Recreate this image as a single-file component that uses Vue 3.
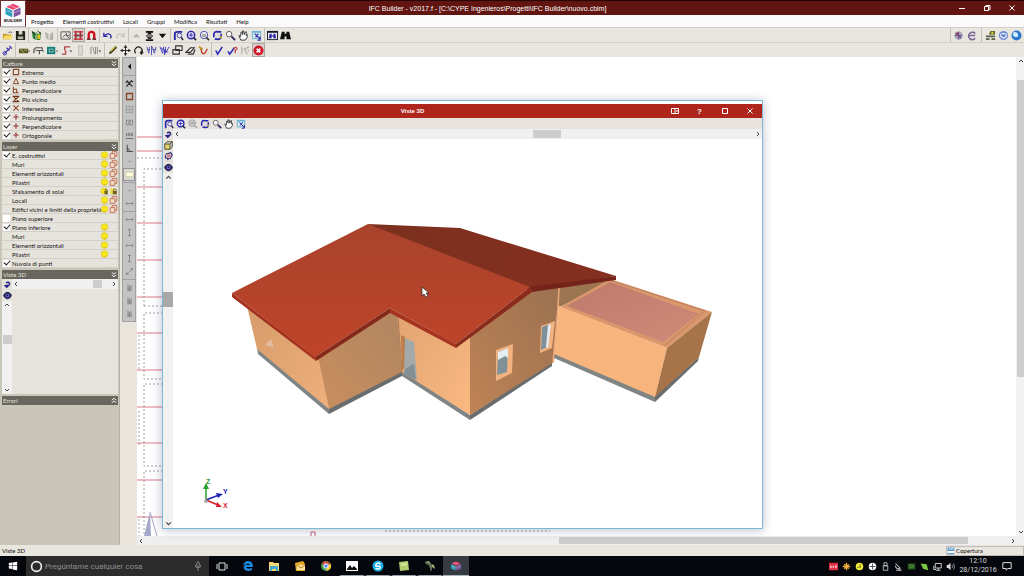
<script setup>
import { ref } from 'vue'

const S = (d, c = '#222', w = 1.3) => `<path d="${d}" fill="none" stroke="${c}" stroke-width="${w}"/>`
const F = (d, c = '#222') => `<path d="${d}" fill="${c}"/>`
const G = '#aaa9a4'
const B = '#2926a8'

const glyphs = {
  open: F('M1 4h4l1 1h4v5H1z', '#c9a227') + F('M3 6h9l-2 4H1z', '#f6dc68') + S('M7 3q2-2 4 0', '#666', 1),
  save: F('M1 1h9l1 1v9H1z', '#22221c') + F('M4 1h4v4H4z', '#d8d8d0') + F('M3 7h6v3H3z', '#b9b9a8'),
  layers: F('M1 1l4 2v8L2 9zM6 2l2 3 3-3-1 9H6z', '#247a2c') + F('M7 5h3v5H7z', '#e0c021') + S('M1 2l4 3M7 1l4 3', '#222', 1),
  layersOff: F('M1 2l4 2v7L2 9zM7 4l3-2v9H6z', '#b5b3ad'),
  template: S('M1 2h10v8H1zM3 8l3-3 4 4M7 3v3h3', '#555', 1),
  dxf: S('M1 2h10M1 6h10M1 10h10M3 1v10M8 1v10', '#c5202d', 1.5) + S('M2 4l8 4M2 8l8-4', '#555', 1),
  magnet: S('M3 11V5q0-3 3-3t3 3v6', '#cf101c', 2.6) + F('M1 9h4v2H1zM7 9h4v2H7z', '#773030'),
  undo: S('M2 3v4h4M2 7q3-4 7-2 2 2 0 4', B),
  redo: S('M10 3v4H6M10 7q-3-4-7-2-2 2 0 4', '#c6c4bf'),
  upOff: F('M2 8l4-4 4 4z', '#b5b3ad'),
  floors: F('M2 1h8v2H2zM2 10h8v2H2zM2 6h8v1H2zM6 2l3 3H3zM6 11l3-3H3z', '#111'),
  down: F('M2 4h8l-4 5z', '#111'),
  zprev: S('M2 11V4q0-2 3-2h5', B, 2) + '<circle cx="7" cy="6" r="2.500" fill="#e8e8fa" stroke="#4a4899"/>' + S('M9 8l2 3', '#26244e', 1.8),
  zall: '<circle cx="5.500" cy="5.500" r="4" fill="#e8e8fa" stroke="#2926a8" stroke-width="1.600"/>' + S('M5.500 3v5M3 5.500h5', B, 1) + S('M8 8l3 3', '#26244e', 1.8),
  zwin: '<circle cx="5.500" cy="5.500" r="4" fill="#f4f4f9" stroke="#4340a5"/>' + S('M4 5h3v2H4z', '#777', 1) + S('M8 8l3 3', '#333', 1.7),
  zgray: '<circle cx="5" cy="5" r="4" fill="#ccc" stroke="#999"/>' + S('M3 5h5M8 8l3 3', '#999', 1.5),
  redraw: F('M4 2h6v7H3z', '#ddd') + S('M2 8V4q1-3 5-2h3M10 4v4q-1 3-5 2H3', B, 1.8) + F('M8 8l3-2-1 4z', '#d5b925'),
  zoom: '<circle cx="4.500" cy="4.500" r="3" fill="#fff" stroke="#555"/>' + S('M7 7l4 4', '#26246e', 2),
  hand: F('M3 11L1 6l2 1V3l1-1 1 3V1h1l1 4 1-3h1v4l1-1v3l-2 3z', '#fff') + S('M3 11L1 6l2 1V3l1-1 1 3V1h1l1 4 1-3h1v4l1-1v3l-2 3z', '#333', 1),
  winfit: F('M1 1h10v9H1z', '#69b4d6') + F('M2 3h8v6H2z', '#d7e8f0') + S('M4 4l6 6M10 7v4H7M8 4L5 8', B, 1.2),
  findwin: F('M0 1h12v10H0z', '#17182c') + F('M1 3h10v7H1z', '#eee') + F('M3 4h2v2h2V4h2l1 5H7V7H5v2H2z', B),
  binoc: F('M2 2h3v2h2V2h3l2 8H7V7H5v3H0z', '#111'),
  addpen: S('M2 10l7-7M8 1l3 3M5 3l3 3', '#403daa', 1.3) + '<circle cx="3" cy="9" r="2" fill="none" stroke="#403daa"/>',
  wall: F('M0 4h10v5H0z', '#55551c') + F('M1 5h3v1H1zM6 5h3v1H6zM3 7h3v1H3z', '#bcb880') + F('M10 6h2l-1 2z', '#444'),
  slab: S('M1 9V5l2-2h7v3H3M7 6v4', '#555', 1.3) + F('M10 6h2l-1 2z', '#444'),
  windowTool: F('M0 2h9v8H0z', '#187c7b') + F('M2 4h5v4H2z', '#86d4c9') + F('M3 5h3v2H3z', '#215959') + F('M10 6h2l-1 2z', '#444'),
  stair: S('M1 10h4V6M4 6V2h6', '#b34545', 1.5) + F('M9 6h3l-1 2z', '#444'),
  column: F('M4 1h4v10H4z', '#dddbd5') + S('M4 1h4v10H4z', '#bbb9b4', 1),
  grid: S('M1 2v8M3 2l2 8M6 2v8M8 2v8', '#888', 1) + F('M9 6h3l-1 2z', '#444'),
  pencil: F('M2 10l1-3 6-6 2 2-6 6z', '#343c19') + S('M4 7l5-5', '#e4c72f', 1.2),
  move: S('M6 1v10M1 6h10', '#222', 1) + F('M6 0l2 3H4zM6 12l2-3H4zM0 6l3-2v4zM12 6L9 4v4z'),
  rotate: S('M3 9a4 4 0 1 1 6 0M9 9V6', '#222', 1.3) + F('M7 8h5l-3 3z'),
  mirror: S('M1 2l2 7 1-7M7 2l2 7 2-7M6 1v10M1 5h3M7 5h4', '#514eb0', 1),
  mirror2: S('M1 2l3 7 1-7M7 2v7l4-7M6 5v6M2 3l8 5', '#3a37bb', 1),
  copy: S('M4 1h7v5H4zM1 5h7v5H1z', '#333', 1.2),
  eraser: S('M1 8l5-5h4l-4 5zM3 10h6l2-5', '#333', 1.3),
  measure: S('M3 3l1 5q2 3 4 0t2-4', '#bd3525', 1.5) + S('M1 2l4 3', '#bb951b', 2),
  check: S('M2 6l2 4 5-8', '#302db7', 1.8),
  checkHelp: S('M1 7l2 3 5-7', '#302db7', 1.8) + S('M7 4q3-3 4 0l-2 2v3', '#bd3030', 1.2),
  cutOff: S('M2 2v8M4 5l6-3M5 5l3 5M9 5v2', G, 1.2),
  stop: '<circle cx="6" cy="6" r="5.500" fill="#cf1625"/>' + S('M4 4l4 4M8 4L4 8', '#fff', 1.7),
  globe: '<circle cx="6" cy="6" r="4.500" fill="#aaa1bc"/>' + S('M2 6h8M6 2v8M3 3l6 6', '#69578b', 1.2) + F('M4 3h2v2H4z', '#b5313a'),
  globe2: S('M10 4a4 4 0 1 0 0 5M3 6h7M8 2l2 2', '#7c6a9b', 1.7),
  books: F('M1 6h10v2H1zM1 9h4v2H1zM7 9h4v2H7z', '#59614a') + F('M6 1h5v4H4z', '#646825') + F('M7 2h2v2H7z', '#e7db48'),
  help: '<circle cx="6" cy="6" r="5" fill="#6d8bd1"/>' + S('M3 4v3l3 2 3-2V4M4 4h4', '#eaf3ff', 1.2),
  web: '<circle cx="6" cy="6" r="5.500" fill="#2d77cc"/>' + F('M3 2l4 1 1 4-3 1-3-2z', '#d4f2ff'),
  square: S('M2 2h8v8H2z', '#8a4726', 1.7),
  triangle: S('M6 2l4 8H2z', '#8a4726', 1.5),
  perp: S('M2 1v9h8M2 5h5v5', '#8a4726', 1.6),
  nearest: S('M1 2h10M1 10h10M2 2l8 8M10 2L2 10', '#713817', 1.8),
  cross: S('M2 2l8 8M10 2L2 10', '#8a4726', 1.7),
  plus: S('M6 2v8M2 6h8', '#963333', 1.6),
  bulb: '<circle cx="6" cy="6" r="5" fill="#f7e71c" stroke="#dbc622"/>' + F('M4 9h4v2H4z', '#e7c61c'),
  cube: F('M1 4h7v7H1z', '#f3dfcf') + S('M1 4h7v7H1zM4 4V1h7v7H8', '#c26a4c', 1.4),
  lock: F('M1 2h6v9H1z', '#eadb4a') + F('M5 6h6v5H5z', '#716019') + S('M6 6V4q2-2 4 0v2', '#716019', 1.3),
  bulbLock: '<circle cx="5" cy="6" r="4.500" fill="#f7e71c" stroke="#dbc622"/>' + F('M6 6h5v5H6z', '#716019') + S('M7 6V4q2-2 3 0v2', '#716019', 1.3),
  rot: F('M1 7l4 4 5-5H7z', '#202088') + S('M4 4q4-3 5 2', '#202088', 2),
  eye: F('M0 6q6-10 12 0-6 10-12 0', '#292763') + '<circle cx="6" cy="6" r="2.500" fill="#6e68c4"/>' + F('M5 5h2v2H5z', '#111133'),
  view3d: F('M1 4h7v7H1z', '#e5d66e') + S('M1 4h7v7H1zM1 4l3-3h7v7l-3 3M8 4l3-3', '#403e2a', 1.2),
  palette: S('M2 3l7-2 2 3-3 5H5M2 4v4h3v3', '#312b71', 1.5) + F('M4 3h5v4H4z', '#d18891'),
  arrowLeft: F('M8 2v8L4 6z', '#111'),
  hammer: S('M2 10l7-8M3 3l7 7M1 5l3-3M8 2l3 2', '#333', 1.6),
  dots: S('M1 2h10M1 6h10M1 10h10M2 1v10M6 1v10M10 1v10', '#8d9094', .8),
  smallsq: S('M2 3h8v6H2z', '#777', 1) + S('M5 5h2v2H5z', '#777', 1),
  ruler: S('M1 10h10', '#666', 1.2) + S('M2 3v4M4 3h2v3H4zM8 3h2v3H8z', '#777', 1.2),
  angle: S('M3 1v9h8M3 5l4 5', '#555', 1.5),
  yellow: F('M1 3h10v6H1z', '#fffddd') + S('M1 3h10v6H1z', '#c6c69b', 1),
  dimH: S('M1 6h10M2 4v4M10 4v4', '#8b8b8b', 1.3),
  dimV: S('M6 1v10M4 2h4M4 10h4', '#8b8b8b', 1.3),
  diag: S('M2 10l8-8M2 7v3h3M7 2h3v3', '#8b8b8b', 1.2),
  faint: S('M3 6h6M6 4v4', '#a4a4a4', 1),
  person: S('M4 2v9M6 4v7M8 3v8M3 8h6', '#898989', 1.5),
  logo: F('M12 1l9 4-9 4-9-4z', '#ed416c') + F('M2 6l9 4v9l-9-4z', '#25a2bc') + F('M22 6l-9 4v9l9-4z', '#7c55a3') + S('M12 9v9M4 10l7 3M13 13l8-3M7 3l10 4', '#f2c7d8', .8),
  start: F('M1 2.500l4-.6V5.500H1zM5.500 1.800l5.500-.8v4.500H5.500zM1 6h4v3.700l-4-.6zM5.500 6H11v5l-5.500-.8z', '#fff'),
  ring: '<circle cx="6" cy="6" r="4.500" fill="none" stroke="#eee" stroke-width="1.500"/>',
  mic: '<rect x="4.500" y="1" width="3" height="6" rx="1.500" fill="none" stroke="#999"/>' + S('M3 5v2q3 3 6 0V5M6 9v3', '#999', 1),
  tasks: S('M3 3h6v7H3zM1 4v5M11 4v5', '#ddd', 1),
  edge: F('M1 6q1-5 5-5 5 0 5 6H4q1 3 6 1v2q-4 2-7 0-3-3 1-6-2 0-3 2m3-1h4q-2-3-4 0', '#168be0'),
  explorer: F('M1 2h4l1 1h5v8H1z', '#f7d873') + F('M2 6h8v5H8V9H4v2H2z', '#40a9d2'),
  outlook: F('M1 3l8-2 2 3v7H2z', '#e6ac2c') + F('M3 5h8v5H3z', '#fae69b') + S('M3 5l4 3 4-3', '#b77b16', 1),
  chrome: '<circle cx="6" cy="6" r="5" fill="#48a350"/>' + F('M2 3q4-4 9 1L6 5 4 7z', '#db4437') + F('M11 4q1 6-5 7l2-6z', '#f6c638') + '<circle cx="6" cy="6" r="2.200" fill="#4c8bf5" stroke="#fff"/>',
  photos: F('M0 1h12v10H0z', '#fff') + F('M1 10V9l3-4 2 3 2-2 3 3v1z', '#111'),
  skype: '<circle cx="6" cy="6" r="5.500" fill="#18aee6"/>' + S('M8.500 4Q5 2 4 4.500T6 6q3 0 2 2-2 2-4.500 0', '#fff', 1.500),
  note: F('M1 2l9-1 1 9-9 1z', '#b5ce6d') + F('M3 4l6-1v2L3 6z', '#d7e9a1'),
  cad: F('M1 2l4-1 2 3 3 1 1 4-3-2-1 4-2-6-3-1z', '#9ab37a') + S('M2 3l5 2v6', '#515b50', 1.500),
  trayRed: F('M0 1h12v10H0z', '#db2f43') + S('M2 5v2h2V5M6 5v3M8 5h2v2H8', '#fff', 1),
  flower: S('M6 1v10M1 6h10M3 3l6 6M9 3L3 9', '#ebaa39', 1.700),
  ycircle: '<circle cx="6" cy="6" r="5" fill="#ece93e"/>' + S('M7 3v4H3', '#777716', 1.400),
  shield: '<circle cx="6" cy="6" r="5" fill="#fff"/>' + S('M6 2v8M2 6h8', '#555', 1.300),
  usb: S('M4 1h4v4H4zM3 5h6v6H3z', '#ddd', 1),
  sat: S('M2 2l6 6M2 5q0 5 7 4M3 11h7', '#ccc', 1.400),
  nvidia: F('M1 2h10v8H1z', '#28581f') + S('M3 5q3-3 6 1-3 3-6 0', '#71b44f', 1),
  leaf: F('M1 2l8 1 2 8-7-2z', '#7bc743'),
  net: S('M3 2h8v6H3zM7 8v3M4 11h6M1 5v5h3', '#ddd', 1.200),
  sound: F('M1 4h2l3-3v10L3 8H1z', '#ddd') + S('M8 4q2 2 0 4M10 2q3 4 0 8', '#bbb', 1),
  message: S('M1 2h10v7H7l-2 2V9H1z', '#ddd', 1.200),
  disk: F('M1 1h10v10H1z', '#4e94c4') + F('M1 6h10v3H1z', '#fff') + F('M3 2h7v2H3z', '#bfe3f5')
}

const menus = ['Progetto', 'Elementi costruttivi', 'Locali', 'Gruppi', 'Modifica', 'Risultati', 'Help']
const bar1 = [['open', 'save'], ['layers', 'layersOff'], ['template', 'dxf', 'magnet'], ['undo', 'redo'], ['upOff', 'floors', 'down'], ['zprev', 'zall', 'zwin', 'redraw', 'zoom', 'hand', 'winfit'], ['findwin', 'binoc']]
const bar1End = [['globe', 'globe2'], ['books', 'help', 'web']]
const bar2 = [['addpen'], ['wall', 'slab', 'windowTool', 'stair', 'column', 'grid'], ['pencil', 'move', 'rotate', 'mirror', 'mirror2', 'copy', 'eraser', 'measure'], ['check', 'checkHelp', 'cutOff', 'stop']]
const sideTools = [['arrowLeft'], ['hammer', 'square', 'dots', 'smallsq', 'ruler', 'angle', 'faint', 'yellow'], ['faint', 'dimH'], ['dimH', 'dimV', 'dimH', 'dimV', 'diag'], ['person', 'person', 'person']]
const snaps = ref([
  ['square', 'Estremo'], ['triangle', 'Punto medio'], ['perp', 'Perpendicolare'], ['nearest', 'Più vicino'],
  ['cross', 'Intersezione'], ['plus', 'Prolungamento'], ['plus', 'Perpendicolare'], ['plus', 'Ortogonale']
].map(([icon, label]) => ({ icon, label, on: true })))
const layers = ref([
  { label: 'E. costruttivi', on: true, icons: ['bulb', 'cube'] },
  { label: 'Muri', icons: ['bulb', 'cube'] },
  { label: 'Elementi orizzontali', icons: ['bulb', 'cube'] },
  { label: 'Pilastri', icons: ['bulb', 'cube'] },
  { label: 'Sfalsamento di solai', icons: ['bulbLock', 'lock'] },
  { label: 'Locali', icons: ['bulb', 'cube'] },
  { label: 'Edifici vicini e limiti della proprietà', icons: ['bulb', 'cube'] },
  { label: 'Piano superiore', on: false, icons: [] },
  { label: 'Piano inferiore', on: true, icons: ['bulb', ''] },
  { label: 'Muri', icons: ['bulb', ''] },
  { label: 'Elementi orizzontali', icons: ['bulb', ''] },
  { label: 'Pilastri', icons: ['bulb', ''] },
  { label: 'Nuvola di punti', on: true, icons: [] }
])
const viewTools = ['zprev', 'zall', 'zgray', 'redraw', 'zoom', 'hand', 'winfit']
const viewSide = ['rot', 'view3d', 'palette', 'eye']
const apps = ['tasks', 'edge', 'explorer', 'outlook', 'chrome', 'photos', 'skype', 'note', 'cad', 'logo']
const running = ['photos', 'skype', 'note', 'cad']
const tray = ['trayRed', 'flower', 'ycircle', 'shield', 'usb', 'sat', 'nvidia', 'leaf', 'net', 'sound']
const planLines = [137, 151, 187, 223, 260, 297, 333, 370, 407, 443, 480, 517]
const box = (n) => (n === 'logo' ? '0 0 24 20' : '0 0 12 12')
</script>

<template>
  <div class="app">
    <header class="top">
      <div class="brand">
        <svg viewBox="0 0 24 20" v-html="glyphs.logo" />
        <b>BUILDER</b>
      </div>
      <div class="titlebar">
        <h1>IFC Builder - v2017.f - [C:\CYPE Ingenieros\Progetti\IFC Builder\nuovo.cbim]</h1>
        <div class="controls">
          <button aria-label="Minimize"><svg viewBox="0 0 8 8"><path d="M1 4.500h6" /></svg></button>
          <button aria-label="Restore"><svg viewBox="0 0 8 8"><path d="M1.500 2.500h4v4h-4zM3 2.500v-1h4v4H5.500" /></svg></button>
          <button aria-label="Close"><svg viewBox="0 0 8 8"><path d="M1.500 1.500l5 5M6.500 1.500l-5 5" /></svg></button>
        </div>
      </div>
      <nav class="menu"><button v-for="m in menus" :key="m">{{ m }}</button></nav>
    </header>

    <div class="toolbar">
      <div v-for="(g, i) in bar1" :key="i" class="group">
        <button v-for="n in g" :key="n" :aria-label="n" :class="{ pressed: n === 'dxf' }"><svg :viewBox="box(n)" v-html="glyphs[n]" /></button>
      </div>
      <span class="spacer" />
      <div v-for="(g, i) in bar1End" :key="'e' + i" class="group end">
        <button v-for="n in g" :key="n" :aria-label="n"><svg :viewBox="box(n)" v-html="glyphs[n]" /></button>
      </div>
    </div>
    <div class="toolbar">
      <div v-for="(g, i) in bar2" :key="i" class="group" :class="{ drops: i === 1 }">
        <button v-for="n in g" :key="n" :aria-label="n" :class="{ pressed: n === 'stop' }"><svg :viewBox="box(n)" v-html="glyphs[n]" /></button>
      </div>
    </div>

    <main class="work">
      <aside class="dock">
        <section>
          <h2>Catture<svg viewBox="0 0 8 8"><path d="M1 1l3 2.500L7 1M1 4.500L4 7l3-2.500" /></svg></h2>
          <label v-for="(s, i) in snaps" :key="i" class="row">
            <input v-model="s.on" type="checkbox" />
            <svg class="snap" viewBox="0 0 12 12" v-html="glyphs[s.icon]" />
            <span class="name">{{ s.label }}</span>
          </label>
        </section>
        <section>
          <h2>Layer<svg viewBox="0 0 8 8"><path d="M1 1l3 2.500L7 1M1 4.500L4 7l3-2.500" /></svg></h2>
          <component :is="l.on === undefined ? 'div' : 'label'" v-for="(l, i) in layers" :key="i" class="row">
            <input v-if="l.on !== undefined" v-model="l.on" type="checkbox" />
            <span v-else class="indent" />
            <span class="name">{{ l.label }}</span>
            <svg v-for="(n, k) in l.icons" :key="k" class="mark" viewBox="0 0 12 12" v-html="glyphs[n] || ''" />
          </component>
        </section>
        <section>
          <h2>Viste 3D<svg viewBox="0 0 8 8"><path d="M1 1l3 2.500L7 1M1 4.500L4 7l3-2.500" /></svg></h2>
          <div class="mini">
            <div class="mini-side">
              <button aria-label="Rotate"><svg viewBox="0 0 12 12" v-html="glyphs.rot" /></button>
              <button aria-label="View"><svg viewBox="0 0 12 12" v-html="glyphs.eye" /></button>
              <div class="vscroll">
                <svg class="arr" viewBox="0 0 8 8"><path d="M2 5l2-2 2 2" /></svg>
                <i class="thumb" />
                <svg class="arr" viewBox="0 0 8 8"><path d="M2 3l2 2 2-2" /></svg>
              </div>
            </div>
            <div class="hscroll">
              <svg class="arr" viewBox="0 0 8 8"><path d="M5 2L3 4l2 2" /></svg>
              <i class="thumb" />
              <svg class="arr" viewBox="0 0 8 8"><path d="M3 2l2 2-2 2" /></svg>
            </div>
          </div>
        </section>
        <section>
          <h2>Errori<svg viewBox="0 0 8 8"><path d="M1 3.500L4 1l3 2.500M1 7l3-2.500L7 7" /></svg></h2>
        </section>
      </aside>

      <div class="strip">
        <div class="tools">
          <div v-for="(g, i) in sideTools" :key="i" class="tgroup">
            <button v-for="(n, k) in g" :key="k" :aria-label="n" :class="{ lit: n === 'yellow' }"><svg viewBox="0 0 12 12" v-html="glyphs[n]" /></button>
          </div>
        </div>
      </div>

      <div class="canvas">
        <svg class="plan" width="879" height="479" viewBox="137 57 879 479">
          <g stroke="#d9788a" stroke-width="1.200">
            <path v-for="y in planLines" :key="y" :d="`M137 ${y}h480`" />
          </g>
          <g fill="none" stroke="#888" stroke-dasharray="2 2" stroke-width=".8">
            <path d="M137 158h30M144 306V169h30M144 306h30M167 313h-23v66h23M167 384h-23v82h23M167 471h-23v65M139 335v35M139 411v36M139 519v17M385 531h165" />
          </g>
          <path d="M150 512l-6 24h7z" fill="#a4a7c7" /><path d="M150 512l7 24" stroke="#a4a7c7" />
          <path d="M311 536v-4h4v4" fill="none" stroke="#d06476" />
        </svg>
        <div class="cv">
          <svg class="arr" viewBox="0 0 8 8"><path d="M2 5l2-2 2 2" /></svg>
          <i class="thumb" />
          <svg class="arr" viewBox="0 0 8 8"><path d="M2 3l2 2 2-2" /></svg>
        </div>
        <div class="ch">
          <svg class="arr" viewBox="0 0 8 8"><path d="M5 2L3 4l2 2" /></svg>
          <i class="thumb" />
          <svg class="arr" viewBox="0 0 8 8"><path d="M3 2l2 2-2 2" /></svg>
        </div>

        <section class="window">
          <div class="wtitle">
            <h2>Viste 3D</h2>
            <div class="controls">
              <button aria-label="Layout"><svg viewBox="0 0 8 8"><path d="M.5 1.500h7v5h-7zM4 2v5M6 3v2" /></svg></button>
              <button aria-label="Help">?</button>
              <button aria-label="Maximize"><svg viewBox="0 0 8 8"><path d="M1.500 1.500h5v5h-5z" /></svg></button>
              <button aria-label="Close window"><svg viewBox="0 0 8 8"><path d="M1.500 1.500l5 5M6.500 1.500l-5 5" /></svg></button>
            </div>
          </div>
          <div class="wtools">
            <button v-for="n in viewTools" :key="n" :aria-label="n"><svg viewBox="0 0 12 12" v-html="glyphs[n]" /></button>
          </div>
          <div class="wbody">
            <div class="wside">
              <button v-for="n in viewSide" :key="n" :aria-label="n"><svg viewBox="0 0 12 12" v-html="glyphs[n]" /></button>
              <div class="vscroll">
                <svg class="arr" viewBox="0 0 8 8"><path d="M2 5l2-2 2 2" /></svg>
                <i class="thumb" />
                <svg class="arr" viewBox="0 0 8 8"><path d="M2 3l2 2 2-2" /></svg>
              </div>
            </div>
            <div class="wview">
              <div class="hscroll">
                <svg class="arr" viewBox="0 0 8 8"><path d="M5 2L3 4l2 2" /></svg>
                <i class="thumb" />
                <svg class="arr" viewBox="0 0 8 8"><path d="M3 2l2 2-2 2" /></svg>
              </div>
              <svg class="model" viewBox="173 139 589 389">
                <defs>
                  <linearGradient id="roof" x1="0" y1="0" x2="0" y2="1"><stop offset="0" stop-color="#a9432c" /><stop offset="1" stop-color="#bf4429" /></linearGradient>
                  <linearGradient id="dark" x1="0" y1="0" x2="1" y2="0"><stop offset="0" stop-color="#7c301e" /><stop offset="1" stop-color="#862f21" /></linearGradient>
                  <linearGradient id="wallA" x1="0" y1="0" x2="1" y2="1"><stop offset="0" stop-color="#d69b6b" /><stop offset="1" stop-color="#eeb07c" /></linearGradient>
                  <linearGradient id="wallB" x1="0" y1="1" x2="1" y2="0"><stop offset="0" stop-color="#c98e5f" /><stop offset="1" stop-color="#b08560" /></linearGradient>
                  <linearGradient id="wallC" x1="0" y1="0" x2="1" y2="1"><stop offset="0" stop-color="#e1a472" /><stop offset="1" stop-color="#fbb981" /></linearGradient>
                  <linearGradient id="gable" x1="0" y1="1" x2="1" y2="0"><stop offset="0" stop-color="#bf8355" /><stop offset="1" stop-color="#9b7150" /></linearGradient>
                  <linearGradient id="flat" x1="0" y1="0" x2="1" y2="1"><stop offset="0" stop-color="#bd7b6d" /><stop offset="1" stop-color="#cf8a78" /></linearGradient>
                </defs>
                <g fill="#7f8484">
                  <path d="M257 348l72 60v6l-71-60z" /><path d="M402 371l68 44v5l-68-44z" /><path d="M554 353l101 43v6l-101-44z" />
                </g>
                <g fill="#696d6e">
                  <path d="M329 408l73-37v5l-73 38z" /><path d="M470 415l82-54v5l-82 54z" /><path d="M655 396l44-39-1 4-43 41z" />
                </g>
                <path d="M247 306l73 51 9 52-72-60z" fill="url(#wallA)" />
                <path d="M265 345l6-6 3 9z" fill="#e3bb9b" />
                <path d="M318 356l75-46 5 6 4 56-73 37z" fill="url(#wallB)" />
                <path d="M470 336l60-47 30-2-6 75-84 53z" fill="url(#gable)" />
                <path d="M397 314l61 30 12-8v79l-68-43z" fill="url(#wallC)" />
                <path d="M398 317l4 55" stroke="#9e714f" stroke-width=".8" />
                <path d="M401 335l4 2v31l-3 2z" fill="#ba7d4b" />
                <path d="M405 338l9 4 3 38-13-6z" fill="#a4a9aa" /><path d="M405 369l9-5 2 16-12-6z" fill="#858f96" />
                <path d="M559 287l55-9-32 19-23 10z" fill="#9b7450" />
                <path d="M559 288l-1 19-5 55" fill="none" stroke="#eda87a" stroke-width="1.500" />
                <path d="M496 350l17-6-1 29-16 8z" fill="#f3b381" />
                <path d="M498 352l10-4-1 24-10 3z" fill="#809297" /><path d="M498 352l10-4v10l-3-2-7 4z" fill="#e4eef3" />
                <path d="M541 326l14-5-3 27-12 5z" fill="#f3b381" />
                <path d="M542 327l8-3-3 23-6 3z" fill="#7e9099" /><path d="M548 325l3-1-3 24-2-1z" fill="#e8edf5" />
                <path d="M560 307l50-28 102 33-45 36z" fill="#d9976b" />
                <path d="M567 306l43-24 89 32-36 28z" fill="url(#flat)" />
                <path d="M610 280l95 31-40 34" fill="none" stroke="#bd8060" />
                <path d="M559 306l108 42-12 49-101-43z" fill="#f7b47d" />
                <path d="M667 348l45-36-13 45-44 40z" fill="#a77349" />
                <path d="M368 224l92 4 156 48-86 14-150-55z" fill="url(#dark)" />
                <path d="M530 287l86-11v4l-84 12z" fill="#74241b" />
                <path d="M368 224l162 63-74 57-66-36-75 49-83-64z" fill="url(#roof)" />
                <path d="M232 293l83 64 1 4-84-64z" fill="#a43120" />
                <path d="M315 357l75-49v5l-74 48z" fill="#852a1b" />
                <path d="M390 308l66 36v4l-66-35z" fill="#a63420" />
                <path d="M456 344l74-57 2 5-76 56z" fill="#8b2b1b" />
                <path d="M422 287v9l2-2 2 3 2-1-2-3h3z" fill="#fff" stroke="#222" stroke-width=".7" />
                <g stroke-width="1.500" fill="none">
                  <path d="M206 500v-12" stroke="#24a12c" /><path d="M206 500l13-5" stroke="#2222b5" /><path d="M206 500l12 5" stroke="#d71f2d" />
                </g>
                <path d="M206 483l-3 6h6z" fill="#24a12c" /><path d="M223 494l-7-1 2 5z" fill="#2222b5" /><path d="M222 507l-5-5-1 5z" fill="#d71f2d" />
                <circle cx="206" cy="501" r="1.500" fill="#bbb" stroke="#777" stroke-width=".6" />
                <g class="axis"><text x="206" y="484" fill="#24a12c">Z</text><text x="223" y="494" fill="#2222b5">Y</text><text x="223" y="508" fill="#d71f2d">X</text></g>
              </svg>
            </div>
          </div>
        </section>
      </div>
    </main>

    <footer class="status">
      <span>Viste 3D</span>
      <span class="plane"><svg viewBox="0 0 12 12" v-html="glyphs.disk" />Copertura</span>
    </footer>

    <div class="taskbar">
      <button class="start" aria-label="Start"><svg viewBox="0 0 12 12" v-html="glyphs.start" /></button>
      <label class="search">
        <svg viewBox="0 0 12 12" v-html="glyphs.ring" />
        <input type="text" placeholder="Pregúntame cualquier cosa" aria-label="Pregúntame cualquier cosa" />
        <svg class="mic" viewBox="0 0 12 12" v-html="glyphs.mic" />
      </label>
      <button v-for="n in apps" :key="n" class="task" :aria-label="n" :class="{ running: running.includes(n), active: n === 'logo' }"><svg :viewBox="box(n)" v-html="glyphs[n]" /></button>
      <div class="tray">
        <svg v-for="n in tray" :key="n" viewBox="0 0 12 12" v-html="glyphs[n]" />
        <time><span>12:10</span><span>28/12/2016</span></time>
        <svg class="msg" viewBox="0 0 12 12" v-html="glyphs.message" />
      </div>
    </div>
  </div>
</template>

<style>
body { margin: 0; overflow: hidden; }
</style>

<style scoped>
* { box-sizing: border-box; }
.app { height: 100vh; display: flex; flex-direction: column; background: #e8e4dd; font: 6px/9px Lato, "Liberation Sans", Arial, sans-serif; color: #111; }
svg { display: block; flex: none; }
button { font: inherit; color: inherit; background: none; border: 0; padding: 0; margin: 0; display: flex; align-items: center; justify-content: center; }
h1, h2 { margin: 0; font-size: 6px; line-height: 9px; }

.top { display: grid; grid-template: 15px 12px / 26px 1fr; }
.brand { grid-row: 1 / 3; background: #faf8f8; border: 1px solid #6b3030; border-bottom-color: #bbb; display: flex; flex-direction: column; align-items: center; padding-top: 2px; }
.brand svg { width: 18px; height: 15px; }
.brand b { font: bold 4px/5px "Liberation Sans", sans-serif; }
.titlebar { background: #611410; border-top: 1px solid #250505; color: #fff; display: flex; align-items: center; }
.titlebar h1 { flex: 1; text-align: center; font: 7px/9px "Liberation Sans", sans-serif; }
.controls { display: flex; }
.controls button { width: 25px; height: 13px; color: #fff; }
.controls svg { width: 8px; height: 8px; fill: none; stroke: #fff; stroke-width: 1; }
.menu { background: #fbfafa; display: flex; align-items: center; padding-left: 5px; gap: 9px; }

.toolbar { height: 15px; flex: none; display: flex; align-items: center; padding-left: 1px; background: #e9e6df; border-top: 1px solid #d2cfc9; }
.toolbar svg { width: 11px; height: 11px; }
.group { display: flex; }
.group + .group { margin-left: 1px; padding-left: 1px; border-left: 1px solid #c3c0b8; }
.group button { width: 13px; height: 14px; }
.group.drops button { width: 14px; }
.group.drops button:last-child { width: 16px; }
.group .pressed { background: #d9d2cf; border: 1px solid #a9a5a0; }
.spacer { flex: 1; }
.end { padding-left: 1px; border-left: 1px solid #c3c0b8; }
.group.end + .group.end { margin-left: 3px; padding-left: 2px; }
.group.end:last-child { padding-right: 1px; }

.work { flex: 1; min-height: 0; display: flex; }
.dock { width: 120px; flex: none; background: #c9c6b9; padding: 2px 1px 0 2px; display: flex; flex-direction: column; gap: 2px; border-right: 1px solid #b5b2aa; }
.dock section { background: #e6e3dd; }
.dock h2 { height: 9px; background: #69665f; color: #e5e2d8; font-weight: normal; display: flex; justify-content: space-between; padding: 0 1px; align-items: center; }
.dock h2 svg { width: 6px; height: 7px; fill: none; stroke: #fff; stroke-width: 1.2; }
.row { height: 9px; display: flex; align-items: center; border-bottom: 1px solid #d3d0c9; }
.row input { appearance: none; width: 7px; height: 7px; margin: 0 2px 0 1px; flex: none; background: #fff; display: grid; place-items: center; }
.row input:checked::after { content: ""; width: 5px; height: 3px; border: solid #111; border-width: 0 0 1px 1px; transform: translateY(-1px) rotate(-48deg); }
.snap { width: 8px; height: 8px; margin-right: 2px; }
.indent { width: 10px; flex: none; }
.name { flex: 1; min-width: 0; white-space: nowrap; }
.mark { width: 9px; height: 8px; }
.mini { display: flex; height: 115px; }
.mini-side, .wside { width: 10px; display: flex; flex-direction: column; background: #f3f3f3; }
.mini-side button, .wside button { height: 11px; background: #e6e3dd; }
.mini-side svg { width: 9px; height: 9px; }
.vscroll { flex: 1; display: flex; flex-direction: column; align-items: center; background: #f1f1f1; }
.hscroll { flex: 1; height: 10px; display: flex; align-items: center; background: #f0f0f0; }
svg.arr { width: 8px; height: 8px; fill: none; stroke: #444; stroke-width: 1; }
.thumb { background: #cdcdcd; display: block; }
.mini .vscroll .thumb { width: 9px; height: 9px; margin: 26px 0 auto; }
.mini .hscroll .thumb { width: 9px; height: 8px; margin: 0 8px 0 auto; }

.strip { width: 17px; flex: none; padding: 0 1px 0 2px; background: #e9e4dc; }
.tools { background: #c4c3c3; border: 1px solid #a2a1a1; }
.tgroup { padding: 1px 0; }
.tgroup + .tgroup { border-top: 1px solid #a2a1a1; }
.tgroup button { width: 100%; height: 13px; }
.tgroup:first-child button { height: 15px; }
.tgroup svg { width: 9px; height: 9px; }
.tgroup .lit { background: #d9d8d4; border: 1px solid #949494; }

.canvas { flex: 1; min-width: 0; position: relative; background: #fff; display: grid; grid-template: 1fr 9px / 1fr 9px; overflow: hidden; }
.plan { grid-area: 1 / 1; }
.cv { grid-area: 1 / 2; background: #f2f2f2; display: flex; flex-direction: column; align-items: center; }
.ch { grid-area: 2 / 1 / 3 / 3; background: #efefef; display: flex; align-items: center; position: relative; padding-right: 8px; }
.cv .thumb { width: 7px; height: 297px; margin: 15px 0 auto; }
.ch .thumb { height: 7px; width: 409px; margin: 0 41px 0 auto; }

.window { position: absolute; left: 25px; top: 43px; width: 601px; height: 429px; display: flex; flex-direction: column; background: #fff; border: 1px solid #7cb7d3; padding-top: 3px; box-shadow: 0 1px 10px rgba(30, 40, 90, .3); }
.wtitle { height: 14px; flex: none; display: flex; align-items: center; background: #b0251b; color: #fff; }
.wtitle h2 { flex: 1; text-align: center; font: bold 6px/9px "Liberation Sans", sans-serif; }
.wtitle .controls button { width: 25px; font: bold 8px/9px "Liberation Sans", sans-serif; }
.wtools { height: 11px; flex: none; display: flex; background: #e8e2df; }
.wtools button { width: 12px; }
.wtools svg { width: 10px; height: 10px; }
.wbody { flex: 1; min-height: 0; display: flex; }
.wside svg { width: 9px; height: 9px; }
.wside .vscroll .thumb { width: 10px; height: 15px; background: #a8a8a8; margin: 110px 0 auto; }
.wview { flex: 1; min-width: 0; display: flex; flex-direction: column; }
.wview .hscroll { flex: none; }
.wview .thumb { width: 28px; height: 8px; margin: 0 193px 0 auto; }
.model { flex: 1; min-height: 0; width: 100%; }
.axis { font: bold 7px "Liberation Sans", sans-serif; }

.status { height: 11px; flex: none; display: flex; align-items: center; justify-content: space-between; padding-left: 2px; background: #e9e5df; }
.plane { width: 78px; height: 10px; display: flex; align-items: center; gap: 1px; border: 1px solid #c0bdb8; }
.plane svg { width: 8px; height: 8px; }

.taskbar { height: 20px; flex: none; display: flex; background: #05070c; color: #ddd; }
.start { width: 26px; }
.start svg { width: 10px; height: 10px; }
.search { width: 183px; display: flex; align-items: center; background: #2c2c2d; padding: 0 6px 0 4px; }
.search svg { width: 13px; height: 13px; }
.search .mic { width: 10px; height: 10px; }
.search input { flex: 1; min-width: 0; border: 0; padding: 0 0 0 2px; background: none; color: #aaa; font: 8px Roboto, "Noto Sans", sans-serif; }
.search input::placeholder { color: #8f8f8f; opacity: 1; }
.task { width: 26px; }
.task svg { width: 12px; height: 12px; }
.task.running { border-bottom: 1px solid #9aa5ae; border-left: 2px solid transparent; border-right: 2px solid transparent; }
.task.active { background: #363b42; border-bottom: 1px solid #a9b6bf; }
.tray { margin-left: auto; display: flex; align-items: center; padding-right: 12px; }
.tray svg { width: 9px; height: 9px; margin-right: 4px; }
.tray time { width: 38px; display: flex; flex-direction: column; align-items: center; font: 7px/9px Roboto, "Noto Sans", sans-serif; }
.tray .msg { width: 10px; height: 10px; margin: 0 0 0 5px; }
</style>
